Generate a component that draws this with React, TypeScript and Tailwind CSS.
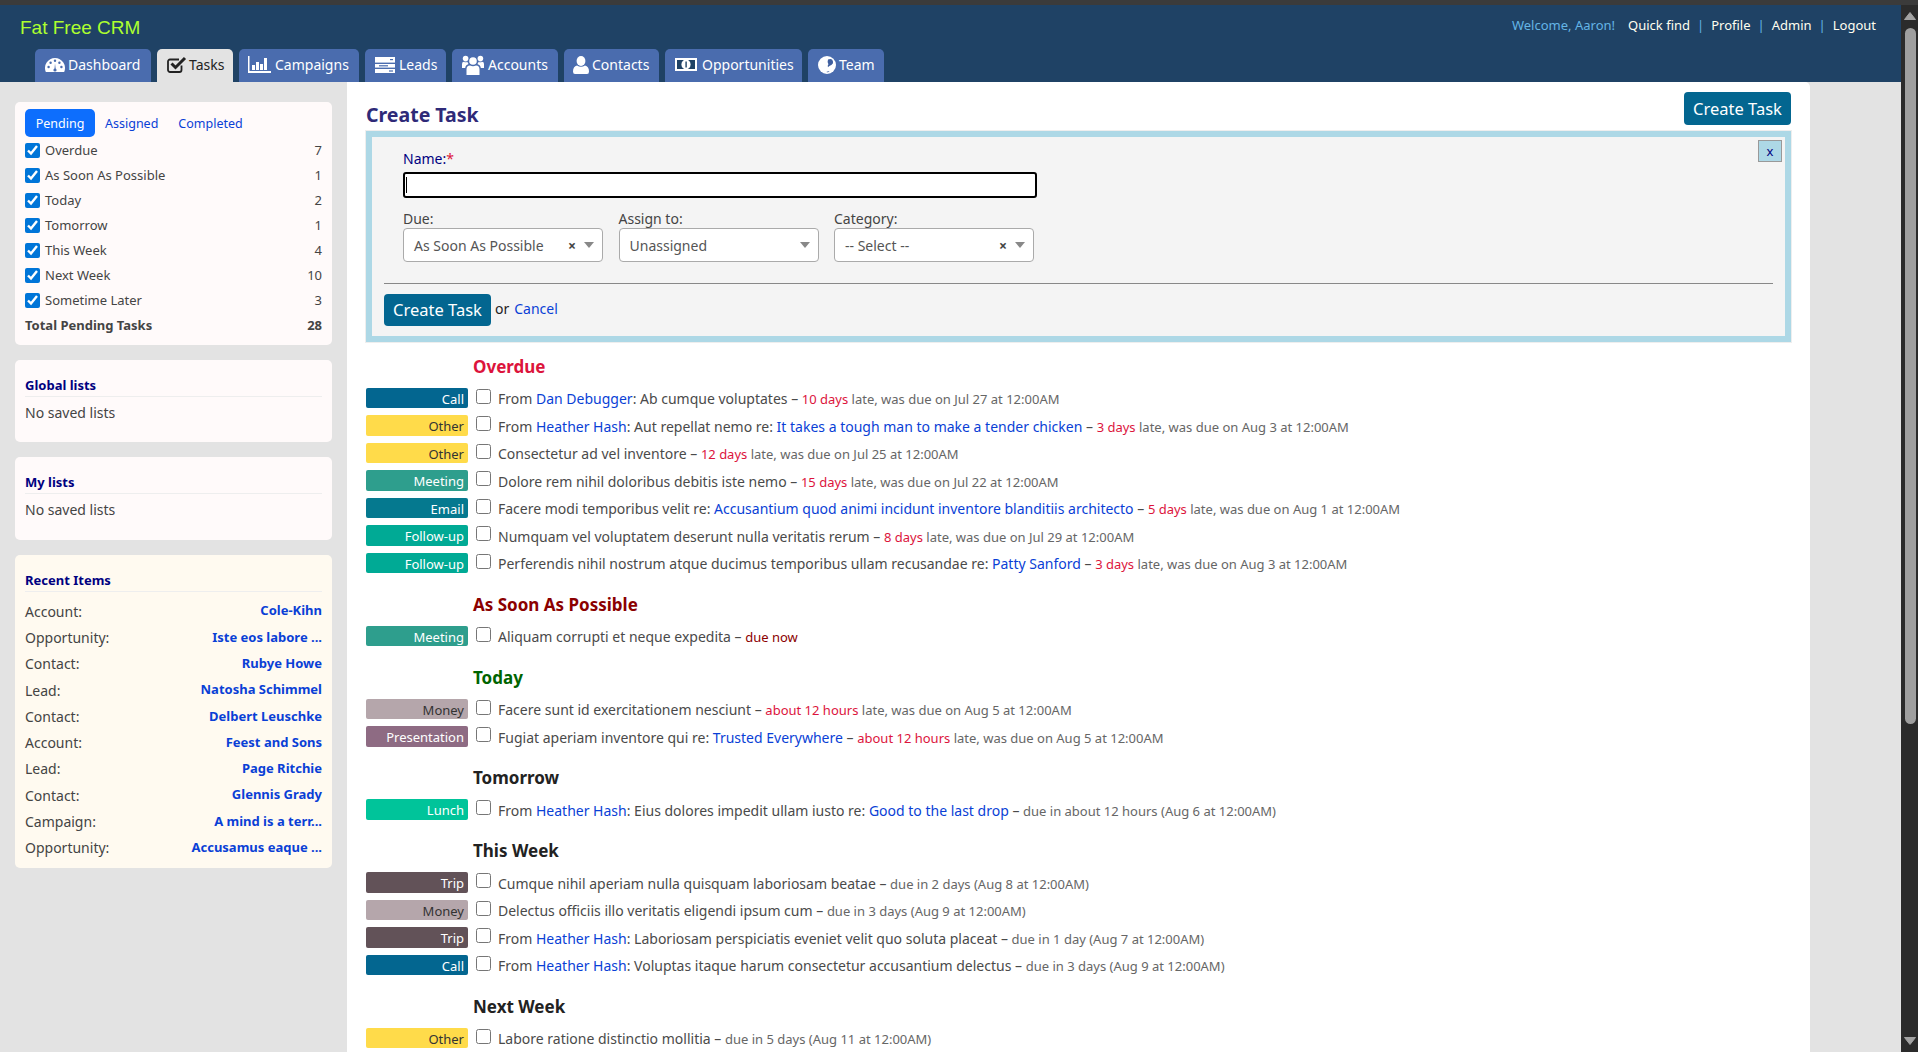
import React from "react";

function DashIcon() {
  return (
    <svg width="20" height="14" viewBox="0 0 20 14" className="shrink-0">
      <path d="M0.83 14A10 10 0 1 1 19.17 14Z" fill="currentColor" />
      {[[3.6, 9], [5.6, 4.8], [10, 2.8], [14.4, 4.8], [16.4, 9]].map(([x, y]) => <circle key={x} cx={x} cy={y} r="1.2" fill="#4a6cae" />)}
      <path d="M9.4 12L10 5.5L10.8 12Z" fill="#4a6cae" />
      <circle cx="10" cy="12" r="1.6" fill="#4a6cae" />
    </svg>
  );
}
function TasksIcon() {
  return (
    <svg width="20" height="17" viewBox="0 0 20 17" className="shrink-0" fill="none" stroke="currentColor">
      <path d="M14.5 9.5V14a2 2 0 0 1-2 2H3a2 2 0 0 1-2-2V5.5a2 2 0 0 1 2-2h9" strokeWidth="1.8" />
      <path d="M4.5 7.5L8.5 11.5L18 2" strokeWidth="3" />
    </svg>
  );
}
function ChartIcon() {
  return (
    <svg width="23" height="17" viewBox="0 0 23 17" className="shrink-0" fill="currentColor">
      <path d="M0 0h1.5v15H23v2H0z" />
      <rect x="4" y="9" width="3" height="5" />
      <rect x="8" y="6" width="3" height="8" />
      <rect x="12" y="8" width="3" height="6" />
      <rect x="16" y="2" width="3" height="12" />
    </svg>
  );
}
function LeadsIcon() {
  return (
    <svg width="20" height="16" viewBox="0 0 20 16" className="shrink-0">
      <rect y="0" width="20" height="5.6" fill="currentColor" />
      <rect y="7" width="20" height="3.6" fill="currentColor" />
      <rect y="12" width="20" height="4" fill="currentColor" />
      <rect x="15" y="2" width="3" height="1.2" fill="#4a6cae" />
      <rect x="4" y="8.2" width="9" height="1.2" fill="#4a6cae" />
      <rect x="14" y="13.4" width="4" height="1.2" fill="#4a6cae" />
    </svg>
  );
}
function UsersIcon() {
  return (
    <svg width="22" height="20" viewBox="0 0 22 20" className="shrink-0" fill="currentColor">
      <circle cx="11" cy="6" r="3.8" />
      <path d="M4.5 20V14.5Q4.5 10.5 8 10.5Q11 12 14 10.5Q17.5 10.5 17.5 14.5V20Z" />
      <circle cx="3.6" cy="3.6" r="2.8" />
      <circle cx="18.4" cy="3.6" r="2.8" />
      <path d="M0 13V9Q0 6.8 2 6.8Q3.6 7.8 5.4 6.8Q5.8 8 6.6 9Q3.4 10 3.2 13Z" />
      <path d="M22 13V9Q22 6.8 20 6.8Q18.4 7.8 16.6 6.8Q16.2 8 15.4 9Q18.6 10 18.8 13Z" />
    </svg>
  );
}
function UserIcon() {
  return (
    <svg width="16" height="18" viewBox="0 0 16 18" className="shrink-0" fill="currentColor">
      <ellipse cx="8" cy="5" rx="4.4" ry="5" />
      <path d="M0 15.5Q0 10.5 4 9.5Q8 12 12 9.5Q16 10.5 16 15.5Q16 18 14 18H2Q0 18 0 15.5Z" />
    </svg>
  );
}
function MoneyIcon() {
  return (
    <svg width="22" height="13" viewBox="0 0 22 13" className="shrink-0">
      <rect width="22" height="13" fill="currentColor" />
      <rect x="2" y="2" width="18" height="9" fill="#1f4265" />
      <ellipse cx="11" cy="6.5" rx="4.6" ry="5" fill="currentColor" />
      <rect x="10.4" y="3.5" width="1.4" height="6" fill="#1f4265" />
    </svg>
  );
}
function GlobeIcon() {
  return (
    <svg width="18" height="18" viewBox="0 0 18 18" className="shrink-0">
      <circle cx="9" cy="9" r="9" fill="currentColor" />
      <path d="M10 3.4Q12.4 2.4 14 3.4Q15.4 5 15 7.2Q13.4 9.6 11.8 9.8Q10.6 10.6 10 11.2Q9.2 9.6 10.4 8.2Q9 6.2 10 3.4Z" fill="#3f5f9f" />
      <path d="M8.4 16Q10.2 14.8 11.6 15.5Q10.2 16.6 8.4 16Z" fill="#3f5f9f" />
    </svg>
  );
}

const tabs = [
  { label: "Dashboard", Icon: DashIcon, w: "w-[116px] pl-[10px] gap-[3px]" },
  { label: "Tasks", Icon: TasksIcon, w: "w-[76px] pl-[10px] gap-[2px]", active: true },
  { label: "Campaigns", Icon: ChartIcon, w: "w-[120px] pl-[9px] gap-[4px]" },
  { label: "Leads", Icon: LeadsIcon, w: "w-[81px] pl-[10px] gap-[4px]" },
  { label: "Accounts", Icon: UsersIcon, w: "w-[106px] pl-[10px] gap-[4px]" },
  { label: "Contacts", Icon: UserIcon, w: "w-[95px] pl-[9px] gap-[3px]" },
  { label: "Opportunities", Icon: MoneyIcon, w: "w-[137px] pl-[10px] gap-[5px]" },
  { label: "Team", Icon: GlobeIcon, w: "w-[76px] pl-[10px] gap-[3px]" },
];

const filters: [string, number][] = [["Overdue", 7], ["As Soon As Possible", 1], ["Today", 2], ["Tomorrow", 1], ["This Week", 4], ["Next Week", 10], ["Sometime Later", 3]];
const recent = [["Account:", "Cole-Kihn"], ["Opportunity:", "Iste eos labore ..."], ["Contact:", "Rubye Howe"], ["Lead:", "Natosha Schimmel"], ["Contact:", "Delbert Leuschke"], ["Account:", "Feest and Sons"], ["Lead:", "Page Ritchie"], ["Contact:", "Glennis Grady"], ["Campaign:", "A mind is a terr..."], ["Opportunity:", "Accusamus eaque ..."]];

const badge: Record<string, string> = {
  Call: "bg-[#036690] text-white",
  Other: "bg-[#ffdb4a] text-[#333333]",
  Meeting: "bg-[#2e9e8d] text-white",
  Email: "bg-[#05798f] text-white",
  "Follow-up": "bg-[#00aa95] text-white",
  Money: "bg-[#b5a6ab] text-[#333333]",
  Presentation: "bg-[#8e6b83] text-white",
  Lunch: "bg-[#00c49a] text-white",
  Trip: "bg-[#625258] text-white",
};

type Part = string | { a: string };
type Task = { c: string; t: Part[]; red?: string; rest: string; redCls?: string };

const sections: { title: string; color: string; tasks: Task[] }[] = [
  { title: "Overdue", color: "text-[#dc143c]", tasks: [
    { c: "Call", t: ["From ", { a: "Dan Debugger" }, ": Ab cumque voluptates"], red: "10 days", rest: " late, was due on Jul 27 at 12:00AM" },
    { c: "Other", t: ["From ", { a: "Heather Hash" }, ": Aut repellat nemo re: ", { a: "It takes a tough man to make a tender chicken" }], red: "3 days", rest: " late, was due on Aug 3 at 12:00AM" },
    { c: "Other", t: ["Consectetur ad vel inventore"], red: "12 days", rest: " late, was due on Jul 25 at 12:00AM" },
    { c: "Meeting", t: ["Dolore rem nihil doloribus debitis iste nemo"], red: "15 days", rest: " late, was due on Jul 22 at 12:00AM" },
    { c: "Email", t: ["Facere modi temporibus velit re: ", { a: "Accusantium quod animi incidunt inventore blanditiis architecto" }], red: "5 days", rest: " late, was due on Aug 1 at 12:00AM" },
    { c: "Follow-up", t: ["Numquam vel voluptatem deserunt nulla veritatis rerum"], red: "8 days", rest: " late, was due on Jul 29 at 12:00AM" },
    { c: "Follow-up", t: ["Perferendis nihil nostrum atque ducimus temporibus ullam recusandae re: ", { a: "Patty Sanford" }], red: "3 days", rest: " late, was due on Aug 3 at 12:00AM" },
  ] },
  { title: "As Soon As Possible", color: "text-[#8b0000]", tasks: [
    { c: "Meeting", t: ["Aliquam corrupti et neque expedita"], red: "due now", rest: "", redCls: "text-[#8b0000]" },
  ] },
  { title: "Today", color: "text-[#006400]", tasks: [
    { c: "Money", t: ["Facere sunt id exercitationem nesciunt"], red: "about 12 hours", rest: " late, was due on Aug 5 at 12:00AM" },
    { c: "Presentation", t: ["Fugiat aperiam inventore qui re: ", { a: "Trusted Everywhere" }], red: "about 12 hours", rest: " late, was due on Aug 5 at 12:00AM" },
  ] },
  { title: "Tomorrow", color: "text-[#222222]", tasks: [
    { c: "Lunch", t: ["From ", { a: "Heather Hash" }, ": Eius dolores impedit ullam iusto re: ", { a: "Good to the last drop" }], rest: "due in about 12 hours (Aug 6 at 12:00AM)" },
  ] },
  { title: "This Week", color: "text-[#222222]", tasks: [
    { c: "Trip", t: ["Cumque nihil aperiam nulla quisquam laboriosam beatae"], rest: "due in 2 days (Aug 8 at 12:00AM)" },
    { c: "Money", t: ["Delectus officiis illo veritatis eligendi ipsum cum"], rest: "due in 3 days (Aug 9 at 12:00AM)" },
    { c: "Trip", t: ["From ", { a: "Heather Hash" }, ": Laboriosam perspiciatis eveniet velit quo soluta placeat"], rest: "due in 1 day (Aug 7 at 12:00AM)" },
    { c: "Call", t: ["From ", { a: "Heather Hash" }, ": Voluptas itaque harum consectetur accusantium delectus"], rest: "due in 3 days (Aug 9 at 12:00AM)" },
  ] },
  { title: "Next Week", color: "text-[#222222]", tasks: [
    { c: "Other", t: ["Labore ratione distinctio mollitia"], rest: "due in 5 days (Aug 11 at 12:00AM)" },
  ] },
];

function FakeSelect({ label, value, clear, w }: { label: string; value: string; clear?: boolean; w: string }) {
  return (
    <div className={w}>
      <div className="h-[18px] leading-[18px] text-[#444444]">{label}</div>
      <div className="flex h-[34px] items-center rounded-[4px] border border-[#aaaaaa] bg-white pl-[10px] pr-[8px] text-[#555555]">
        <span className="flex-1">{value}</span>
        {clear && <span className="mr-[8px] text-[14px] font-bold text-[#444444]">×</span>}
        <span className="h-0 w-0 border-x-[5px] border-t-[6px] border-x-transparent border-t-[#888888]" />
      </div>
    </div>
  );
}

function Row({ task }: { task: Task }) {
  return (
    <div className="flex h-[27.5px] items-start">
      <div className={`flex h-[20.5px] w-[102px] shrink-0 items-center justify-end rounded-[2px] pr-[4px] pt-[3px] text-[13px] ${badge[task.c]}`}>{task.c}</div>
      <input type="checkbox" readOnly className="ml-[8px] mt-[1px] h-[15px] w-[15px] shrink-0" />
      <div className="ml-[7px] whitespace-nowrap pt-[1.5px] leading-[20px] text-[#4a4a4a]">
        {task.t.map((p, i) => typeof p === "string" ? <span key={i}>{p}</span> : <a key={i} className="text-[#0a3fd6]">{p.a}</a>)}
        <span> – </span>
        <span className="text-[13px] text-[#666666]">
          {task.red && <span className={task.redCls ?? "text-[#dc143c]"}>{task.red}</span>}
          {task.rest}
        </span>
      </div>
    </div>
  );
}

export default function App() {
  return (
    <div className="flex h-screen w-full flex-col overflow-hidden bg-[#e3e3e3] text-[14px] [font-family:'Noto_Sans',sans-serif]">
      <div className="h-[5px] shrink-0 bg-[#3b3b3b]" />
      <div className="flex min-h-0 flex-1">
        <div className="flex min-w-0 flex-1 flex-col">
          <header className="relative h-[77px] shrink-0 bg-[#1f4265]">
            <div className="flex items-start justify-between pl-[20px] pr-[25px] pt-[9px]">
              <div className="text-[19px] leading-[28px] text-[#adff2f] [font-family:'Liberation_Sans',sans-serif]">Fat Free CRM</div>
              <div className="flex items-center text-[13px] leading-[22px] text-[#fffff0]">
                <span className="mr-[13px] text-[#64b5e6]">Welcome, Aaron!</span>
                <span>Quick find</span><span className="mx-[7px] text-[#64b5e6]">|</span>
                <span>Profile</span><span className="mx-[7px] text-[#64b5e6]">|</span>
                <span>Admin</span><span className="mx-[7px] text-[#64b5e6]">|</span>
                <span>Logout</span>
              </div>
            </div>
            <nav className="absolute bottom-0 left-[35px] flex gap-[6px]">
              {tabs.map(({ label, Icon, w, active }) => (
                <div key={label} className={`flex h-[33px] items-center rounded-t-[5px] pb-[2px] text-[14px] ${w} ${active ? "bg-[#e3e3e3] text-[#222222]" : "bg-[#4a6cae] text-white"}`}>
                  <Icon />
                  <span>{label}</span>
                </div>
              ))}
            </nav>
          </header>
          <div className="flex min-h-0 flex-1">
            <aside className="flex w-[347px] shrink-0 flex-col gap-[15px] pl-[15px] pr-[15px] pt-[20px] text-[#444444]">
              <section className="rounded-[5px] bg-[#fffafa] px-[10px] pb-[7px] pt-[7px]">
                <div className="flex h-[28px] items-center text-[12.5px]">
                  <span className="flex h-[28px] w-[70px] items-center justify-center rounded-[5px] bg-[#0d6efd] pt-[2px] text-white">Pending</span>
                  <span className="ml-[10px] pt-[2px] text-[#0a3fd6]">Assigned</span>
                  <span className="ml-[20px] pt-[2px] text-[#0a3fd6]">Completed</span>
                </div>
                <div className="mt-[1px]">
                  {filters.map(([l, n]) => (
                    <div key={l} className="flex h-[25px] items-center text-[13px]">
                      <input type="checkbox" defaultChecked className="h-[15px] w-[15px] accent-[#0075d8]" />
                      <span className="ml-[5px] flex-1">{l}</span>
                      <span>{n}</span>
                    </div>
                  ))}
                  <div className="flex h-[25px] items-center justify-between text-[13px] font-bold"><span>Total Pending Tasks</span><span>28</span></div>
                </div>
              </section>
              <section className="h-[82px] rounded-[5px] bg-[#fffafa] px-[10px] pt-[15px]">
                <div className="border-b border-[#eeeeee] pb-[1px] text-[13px] font-bold leading-[20px] text-[#000080]">Global lists</div>
                <div className="mt-[6px] leading-[20px]">No saved lists</div>
              </section>
              <section className="h-[83px] rounded-[5px] bg-[#fffafa] px-[10px] pt-[15px]">
                <div className="border-b border-[#eeeeee] pb-[1px] text-[13px] font-bold leading-[20px] text-[#000080]">My lists</div>
                <div className="mt-[6px] leading-[20px]">No saved lists</div>
              </section>
              <section className="h-[313px] rounded-[5px] bg-[#fffaf0] px-[10px] pt-[15px]">
                <div className="border-b border-[#eeeeee] pb-[1px] text-[13px] font-bold leading-[20px] text-[#000080]">Recent Items</div>
                <div className="mt-[6px]">
                  {recent.map(([k, v], i) => (
                    <div key={i} className="flex h-[26.3px] items-center justify-between">
                      <span>{k}</span><span className="text-[13px] font-bold text-[#0a3fd6]">{v}</span>
                    </div>
                  ))}
                </div>
              </section>
            </aside>
            <main className="min-w-0 w-[1463px] shrink-0 rounded-tr-[5px] bg-white pl-[19px] pr-[19px]">
              <div className="flex h-[48px] items-end justify-between">
                <h1 className="pb-[1px] text-[19.5px] font-bold leading-[28px] text-[#2e2a78]">Create Task</h1>
                <button className="mb-[5px] h-[33px] w-[107px] rounded-[4px] bg-[#036690] pt-[1px] text-[16.5px] text-white">Create Task</button>
              </div>
              <div className="relative mt-[1px] h-[211px] border-[6px] border-[#add8e6] bg-[#f4f4f4] pl-[31px] pr-[12px] outline outline-1 outline-[#eeeeee]">
                <button className="absolute right-[3px] top-[3px] h-[22px] w-[24px] border border-[#999999] bg-[#add8e6] text-[13px] leading-[18px] text-[#000080]">x</button>
                <div className="pt-[12px] leading-[20px] text-[#000080]">Name:<span className="text-[#dc143c]">*</span></div>
                <div className="relative mt-[3px] w-[634px]">
                  <input className="block h-[26px] w-full rounded-[3px] border-2 border-black bg-white outline-none" />
                  <span className="absolute left-[3px] top-[5px] h-[16px] w-px bg-black" />
                </div>
                <div className="mt-[12px] flex gap-[15.5px]">
                  <FakeSelect w="w-[200px]" label="Due:" value="As Soon As Possible" clear />
                  <FakeSelect w="w-[200px]" label="Assign to:" value="Unassigned" />
                  <FakeSelect w="w-[200px]" label="Category:" value="-- Select --" clear />
                </div>
                <div className="-ml-[19px] mt-[21px] border-t border-[#888888]" />
                <div className="-ml-[19px] mt-[10px] flex items-center">
                  <button className="h-[32px] w-[107px] rounded-[4px] bg-[#036690] text-[16.5px] text-white">Create Task</button>
                  <span className="ml-[4px] pb-[3px] text-[#222222]">or</span>
                  <a className="ml-[5px] pb-[3px] text-[#0a3fd6]">Cancel</a>
                </div>
              </div>
              {sections.map((s) => (
                <section key={s.title}>
                  <div className="flex h-[45.5px] items-end pb-[7px] pl-[107px]">
                    <h2 className={`text-[17px] font-bold leading-[28px] ${s.color}`}>{s.title}</h2>
                  </div>
                  {s.tasks.map((t, i) => <Row key={i} task={t} />)}
                </section>
              ))}
            </main>
            <div className="flex-1" />
          </div>
        </div>
        <div className="relative w-[17px] shrink-0 bg-[#2b2b2b]">
          <svg className="absolute left-[3px] top-[7px]" width="12" height="8" viewBox="0 0 12 8"><path d="M6 0.5L11.5 7.5H0.5z" fill="#a3a3a3" stroke="#a3a3a3" strokeLinejoin="round" /></svg>
          <div className="absolute left-[4px] top-[23px] h-[696px] w-[11px] rounded-full bg-[#9f9f9f]" />
          <svg className="absolute bottom-[7px] left-[3px]" width="12" height="8" viewBox="0 0 12 8"><path d="M6 7.5L11.5 0.5H0.5z" fill="#a3a3a3" stroke="#a3a3a3" strokeLinejoin="round" /></svg>
        </div>
      </div>
    </div>
  );
}
